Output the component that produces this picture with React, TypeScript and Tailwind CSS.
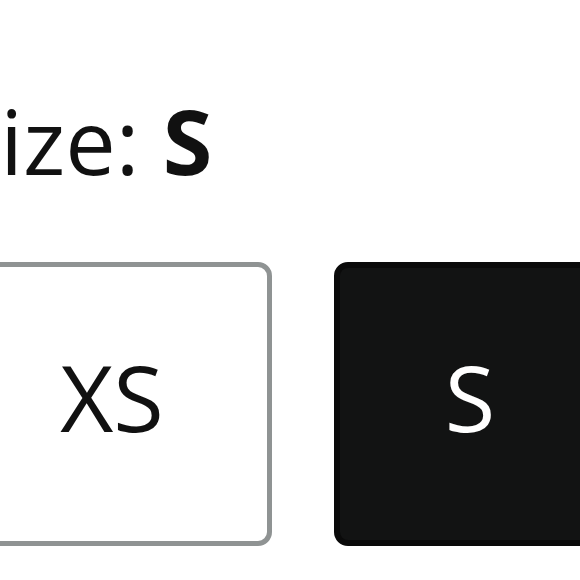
export default function App() {
  return (
    <div
      className="w-[580px] h-[580px] overflow-hidden bg-white relative"
      style={{ fontFamily: '"Open Sans", "Noto Sans", sans-serif' }}
    >
      <div className="pt-[87px] flex flex-col">
        <div className="ml-[-49px] text-[90px] leading-[106px] text-[#111] whitespace-nowrap">
          Size: <span className="font-bold">S</span>
        </div>
        <div className="ml-[-48px] mt-[69px] flex gap-[62px]">
          <button className="w-[320px] shrink-0 h-[284px] rounded-[14px] border-[5px] border-[#8f9393] bg-white text-[#111] text-[92px] flex items-center justify-center pb-[14px]">
            XS
          </button>
          <button className="w-[272px] shrink-0 h-[284px] rounded-[14px] border-[6px] border-[#0a0a0a] bg-[#121313] text-white text-[92px] flex items-center justify-center pb-[14px]">
            S
          </button>
        </div>
      </div>
    </div>
  );
}
